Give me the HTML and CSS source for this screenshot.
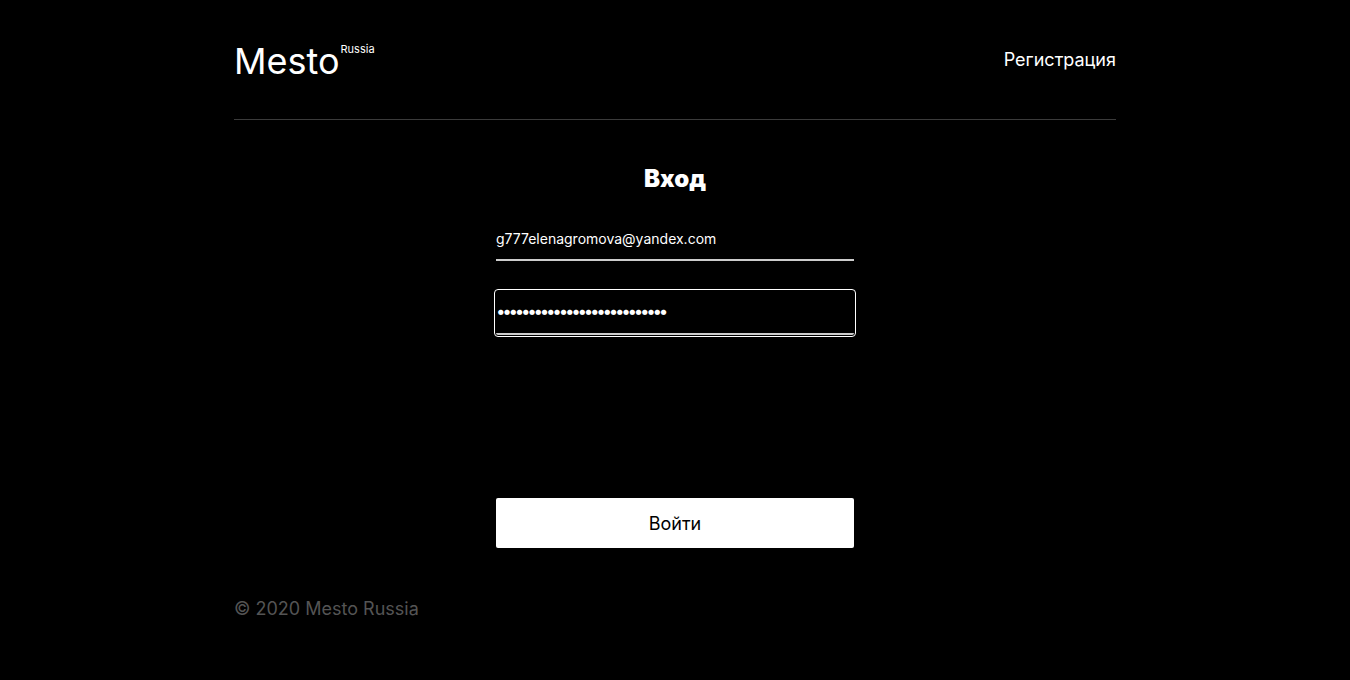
FILE: index.html
```html
<!DOCTYPE html>
<html lang="ru">
<head>
<meta charset="utf-8">
<title>Mesto</title>
<link rel="stylesheet" href="styles.css">
</head>
<body>
<div class="page">
  <header class="header">
    <div class="logo"><span class="logo__name">Mesto</span><span class="logo__sup">Russia</span></div>
    <a class="header__link" href="#">Регистрация</a>
  </header>
  <main class="auth">
    <h1 class="auth__title">Вход</h1>
    <form class="auth__form">
      <input class="auth__input" type="email" value="g777elenagromova@yandex.com">
      <input class="auth__input auth__input_type_password auth__input_focused" type="password" value="abcdefghijklmnopqrstuvwxyz1">
      <button class="auth__button" type="button">Войти</button>
    </form>
  </main>
  <footer class="footer">© 2020 Mesto Russia</footer>
</div>
</body>
</html>
```
FILE: styles.css
```css
* { box-sizing: border-box; }
html, body { margin: 0; background: #000; }
body { font-family: Inter, "Noto Sans", sans-serif; color: #fff; }
.page { width: 882px; margin: 0 auto; }
.header {
  display: flex;
  justify-content: space-between;
  align-items: center;
  padding: 40px 0 37px;
  border-bottom: 1px solid rgba(84, 84, 84, 0.7);
}
.logo { display: flex; align-items: flex-start; }
.logo__name { font-size: 36px; line-height: 42px; font-weight: 400; }
.logo__sup { font-size: 11px; line-height: 13px; margin-left: 1px; margin-top: 3px; }
.header__link { color: #fff; text-decoration: none; font-size: 18px; line-height: 22px; margin-top: -2px; }
.auth { width: 358px; margin: 0 auto; padding-top: 44px; }
.auth__title { margin: 0; text-align: center; font-size: 24px; line-height: 29px; font-weight: 900; }
.auth__form { display: flex; flex-direction: column; margin-top: 24px; }
.auth__input {
  height: 44px;
  padding: 0;
  background: transparent;
  border: none;
  border-bottom: 2px solid #ccc;
  color: #fff;
  font-family: Inter, sans-serif;
  font-size: 14px;
  outline: none;
}
.auth__input_type_password { font-size: 17px; letter-spacing: -3.3px; padding-bottom: 2px; }
.auth__input + .auth__input { margin-top: 30px; }
.auth__input_focused { outline: 1px solid #fff; outline-offset: 1px; border-radius: 2px; }
.auth__button {
  margin-top: 163px;
  height: 50px;
  background: #fff;
  border: none;
  border-radius: 2px;
  color: #000;
  font-family: Inter, sans-serif;
  font-size: 18px;
}
.footer { margin-top: 50px; font-size: 18px; line-height: 22px; color: #545454; padding-bottom: 60px; }
```
